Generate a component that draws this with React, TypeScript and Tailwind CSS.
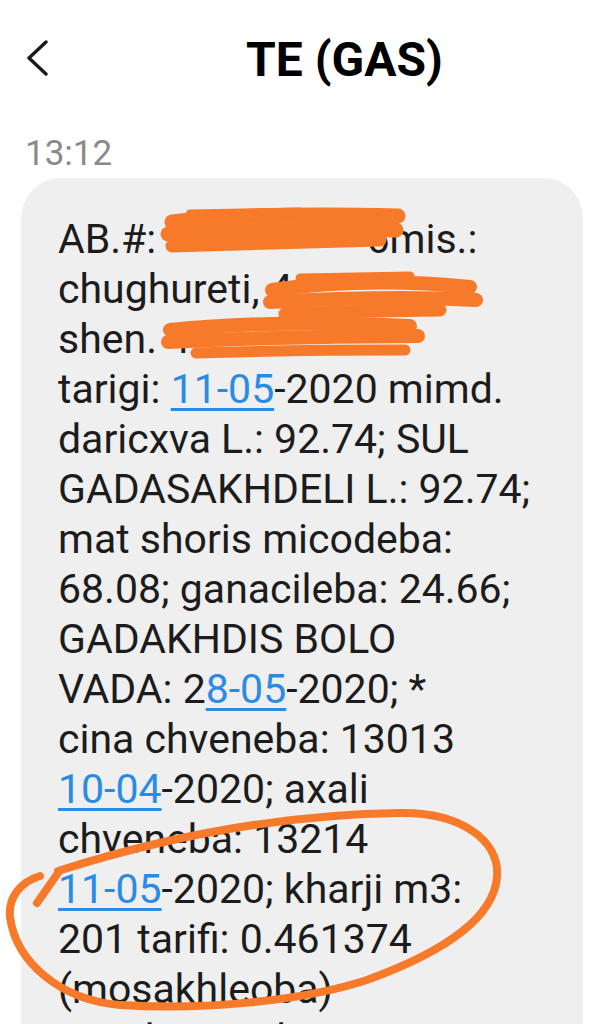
import React from "react";

const Link = ({ children }: { children: React.ReactNode }) => (
  <span className="text-[#2a8be6] underline decoration-[2.5px] underline-offset-[5px]">{children}</span>
);

const Gap = ({ w }: { w: number }) => <span className="inline-block" style={{ width: w }} />;

export default function App() {
  return (
    <div className="relative h-[1024px] overflow-hidden bg-white font-['Roboto',sans-serif]">
      {/* header */}
      <div className="flex items-start pt-[36px]">
        <svg width="24" height="38" viewBox="0 0 24 38" className="ml-[26px] mt-[4px] shrink-0" fill="none">
          <polyline points="20,2 3,18 20,34" stroke="#1a1a1a" strokeWidth="3.4" strokeLinecap="round" strokeLinejoin="round" />
        </svg>
        <h1 className="flex-1 pl-[34px] text-center text-[48px] font-bold leading-[48px] text-black">TE (GAS)</h1>
      </div>

      <div className="mt-[52px] pl-[25px] text-[35px] leading-[35px] text-[#8a8a8a]">13:12</div>

      {/* message bubble */}
      <div className="ml-[21px] mt-[7px] w-[562px] rounded-[40px] bg-[#efefef] pb-[60px] pl-[37px] pr-[20px] pt-[36px] text-[41px] leading-[50px] text-[#1c1c1c]">
        <div className="whitespace-nowrap">AB.#: <Gap w={200} />6mis.:</div>
        <div className="whitespace-nowrap">chughureti, 4</div>
        <div className="whitespace-nowrap">shen. 4<Gap w={190} />:</div>
        <div className="whitespace-nowrap">tarigi: <Link>11-05</Link>-2020 mimd.</div>
        <div className="whitespace-nowrap">daricxva L.: 92.74; SUL</div>
        <div className="whitespace-nowrap">GADASAKHDELI L.: 92.74;</div>
        <div className="whitespace-nowrap">mat shoris micodeba:</div>
        <div className="whitespace-nowrap">68.08; ganacileba: 24.66;</div>
        <div className="whitespace-nowrap">GADAKHDIS BOLO</div>
        <div className="whitespace-nowrap">VADA: 2<Link>8-05</Link>-2020; *</div>
        <div className="whitespace-nowrap">cina chveneba: 13013</div>
        <div className="whitespace-nowrap"><Link>10-04</Link>-2020; axali</div>
        <div className="whitespace-nowrap">chveneba: 13214</div>
        <div className="whitespace-nowrap"><Link>11-05</Link>-2020; kharji m3:</div>
        <div className="whitespace-nowrap">201 tarifi: 0.461374</div>
        <div className="whitespace-nowrap">(mosakhleoba)</div>
        <div className="whitespace-nowrap">* gadasaxadi</div>
      </div>

      {/* hand-drawn marker over the screenshot */}
      <svg className="pointer-events-none absolute left-0 top-0" width="605" height="1024" viewBox="0 0 605 1024" fill="none">
        <g stroke="#f77a2b" strokeLinecap="round" strokeLinejoin="round">
          {/* redaction line 1 */}
          <path d="M172 222 C 240 214 320 214 398 216" strokeWidth="15" />
          <path d="M168 234 C 250 230 330 228 396 230" strokeWidth="15" />
          <path d="M172 246 C 240 244 300 242 380 240" strokeWidth="13" />
          <path d="M190 214 L 300 212" strokeWidth="9" />
          {/* redaction line 2 */}
          <path d="M272 290 C 330 282 400 280 470 287" strokeWidth="14" />
          <path d="M270 302 C 340 298 410 296 476 300" strokeWidth="14" />
          <path d="M285 314 C 340 312 400 310 440 310" strokeWidth="13" />
          <path d="M300 278 L 410 276" strokeWidth="9" />
          {/* redaction line 3 */}
          <path d="M170 330 C 250 322 330 322 410 326" strokeWidth="14" />
          <path d="M168 342 C 250 338 340 336 418 336" strokeWidth="14" />
          <path d="M196 353 C 260 351 340 350 405 350" strokeWidth="11" />
          {/* circle */}
          <path d="M37 903 L 58 873" strokeWidth="8" />
          <path
            d="M58 871 C 130 848 250 815 400 813 C 460 812 500 840 497 877 C 494 915 450 950 367 980 C 300 1002 200 1010 120 1005 C 60 1000 16 962 10 917 C 8 898 20 882 40 876"
            strokeWidth="8"
          />
        </g>
      </svg>
    </div>
  );
}
